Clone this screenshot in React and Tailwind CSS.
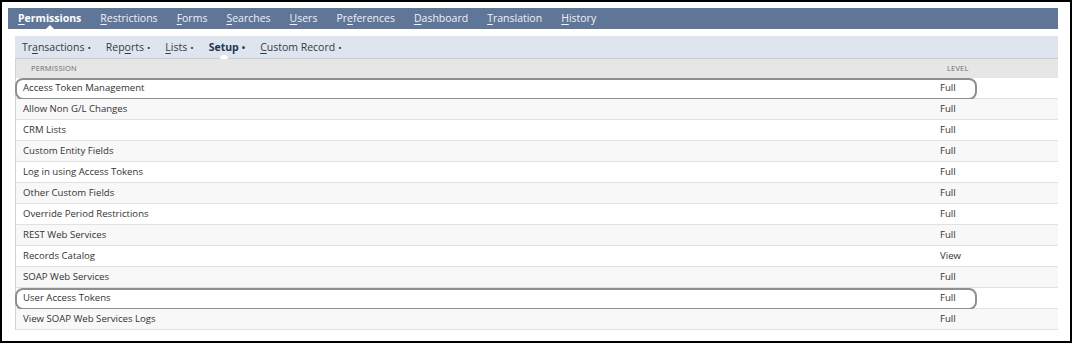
const topTabs = [
  { pre: "", key: "P", post: "ermissions", active: true },
  { pre: "", key: "R", post: "estrictions" },
  { pre: "", key: "F", post: "orms" },
  { pre: "", key: "S", post: "earches" },
  { pre: "", key: "U", post: "sers" },
  { pre: "Pr", key: "e", post: "ferences" },
  { pre: "", key: "D", post: "ashboard" },
  { pre: "", key: "T", post: "ranslation" },
  { pre: "", key: "H", post: "istory" },
]

const subTabs = [
  { pre: "Tr", key: "a", post: "nsactions" },
  { pre: "Rep", key: "o", post: "rts" },
  { pre: "", key: "L", post: "ists" },
  { pre: "Setup", key: "", post: "", active: true },
  { pre: "", key: "C", post: "ustom Record" },
]

const rows = [
  ["Access Token Management", "Full", true],
  ["Allow Non G/L Changes", "Full"],
  ["CRM Lists", "Full"],
  ["Custom Entity Fields", "Full"],
  ["Log in using Access Tokens", "Full"],
  ["Other Custom Fields", "Full"],
  ["Override Period Restrictions", "Full"],
  ["REST Web Services", "Full"],
  ["Records Catalog", "View"],
  ["SOAP Web Services", "Full"],
  ["User Access Tokens", "Full", true],
  ["View SOAP Web Services Logs", "Full"],
]

function Label({ item }) {
  return (
    <>
      {item.pre}
      {item.key && <span className="underline underline-offset-2">{item.key}</span>}
      {item.post}
    </>
  )
}

export default function App() {
  return (
    <div className="w-[1074px] h-[344px] bg-white" style={{ fontFamily: '"Open Sans", "Liberation Sans", sans-serif' }}>
      <div className="w-[1072px] h-[343px] border-2 border-black pl-[6px] pt-[6px]">
        {/* top tabs */}
        <div className="w-[1050px] h-[21px] bg-[#5f7698] flex items-center pl-[10px] gap-[19px]">
          {topTabs.map((t) => (
            <div
              key={t.key + t.post}
              className={`relative h-full flex items-center text-[10.5px] leading-none ${
                t.active ? "font-bold text-white" : "text-[#eef1f6]"
              }`}
            >
              <Label item={t} />
              {t.active && (
                <span className="absolute bottom-0 left-1/2 -translate-x-1/2 w-0 h-0 border-x-[4px] border-x-transparent border-b-[4px] border-b-white" />
              )}
            </div>
          ))}
        </div>

        {/* sub tabs + table */}
        <div className="ml-[7px] mt-[7px] w-[1043px]">
          <div className="h-[23px] bg-[#dfe5ee] flex items-center pl-[7px] gap-[15px] border-b border-[#c9ccd1]">
            {subTabs.map((t) => (
              <div
                key={t.pre + t.post}
                className={`relative h-full flex items-center text-[10.5px] leading-none ${
                  t.active ? "font-bold text-[#1f3454]" : "text-[#333a45]"
                }`}
              >
                <Label item={t} />
                <span className="ml-[3px] text-[9px]">•</span>
                {t.active && (
                  <span className="absolute -bottom-px left-[11px] w-[8px] h-[4px] rounded-t-full bg-white" />
                )}
              </div>
            ))}
          </div>

          <div className="border-l border-[#d4d4d4]">
            <div className="h-[19px] bg-[#e6e6e6] flex items-center text-[7.5px] text-[#6b6b6b] tracking-wide">
              <div className="w-[917px] pl-[15px]">PERMISSION</div>
              <div className="pl-[14px]">LEVEL</div>
            </div>
            {rows.map(([name, level, marked], i) => (
              <div
                key={name}
                className={`relative h-[21px] flex items-center text-[9.6px] text-[#333333] border-b border-[#e1e1e1] ${
                  i % 2 === 0 ? "bg-white" : "bg-[#f8f8f8]"
                }`}
              >
                <div className="w-[917px] pl-[7px]">{name}</div>
                <div className="pl-[7px]">{level}</div>
                {marked && (
                  <div className="absolute -left-px top-0 w-[962px] h-[22px] rounded-[8px] border-[2.5px] border-[#8f8f8f]" />
                )}
              </div>
            ))}
          </div>
        </div>
      </div>
    </div>
  )
}
